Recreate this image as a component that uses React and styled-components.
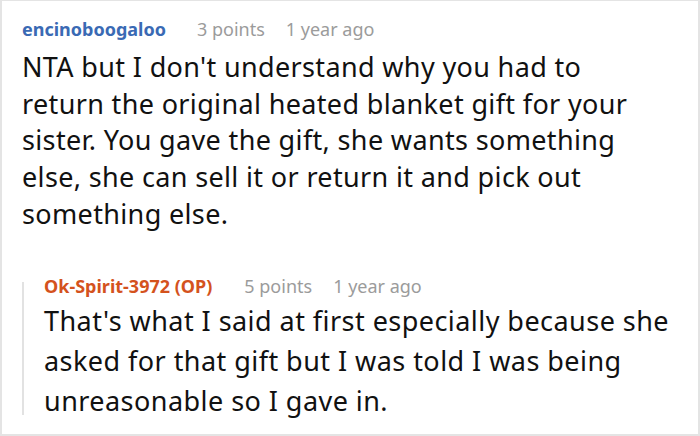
import React from 'react';
import styled, { createGlobalStyle } from 'styled-components';

const GlobalStyle = createGlobalStyle`
  html, body {
    margin: 0;
    padding: 0;
    background: #ffffff;
  }
  body {
    font-family: "Noto Sans", "Open Sans", sans-serif;
  }
`;

const Frame = styled.div`
  box-sizing: border-box;
  width: 700px;
  height: 436px;
  border: 2px solid #e4e4e4;
  border-top-width: 1px;
  padding: 18px 20px 0 20px;
  background: #fff;
  overflow: hidden;
`;

const Header = styled.div`
  display: flex;
  align-items: baseline;
  height: 20px;
  line-height: 20px;
  font-size: 18px;
  white-space: nowrap;
`;

const Author = styled.span`
  font-weight: 700;
  color: ${p => (p.$op ? '#d4521d' : '#3a6ab4')};
`;

const Meta = styled.span`
  color: #9b9b9b;
  margin-left: ${p => p.$gap}px;
`;

const Body = styled.p`
  margin: ${p => p.$top}px ${p => p.$right}px 0 0;
  font-size: 27px;
  letter-spacing: ${p => p.$ls}px;
  line-height: ${p => p.$lh}px;
  color: #111;
`;

const Reply = styled.div`
  position: relative;
  margin-top: ${p => p.$top}px;
  padding-left: 22px;

  &::before {
    content: '';
    position: absolute;
    left: 0;
    top: 6px;
    bottom: 6px;
    width: 2px;
    background: #e2e2e2;
  }
`;

const Comment = ({ author, op, points, time, gaps, children, bodyTop, lh, ls, right = 0 }) => (
  <>
    <Header>
      <Author $op={op}>{author}</Author>
      <Meta $gap={gaps[0]}>{points} points</Meta>
      <Meta $gap={gaps[1]}>{time}</Meta>
    </Header>
    <Body $top={bodyTop} $lh={lh} $ls={ls} $right={right}>{children}</Body>
  </>
);

export default function App() {
  return (
    <>
      <GlobalStyle />
      <Frame>
        <Comment
          author="encinoboogaloo"
          points={3}
          time="1 year ago"
          gaps={[31, 21]}
          bodyTop={10}
          lh={36.7}
          ls={0.35}
          right={36}
        >
          NTA but I don't understand why you had to return the original heated blanket gift
          for your sister. You gave the gift, she wants something else, she can sell it or
          return it and pick out something else.
        </Comment>
        <Reply $top={43}>
          <Comment
            author="Ok-Spirit-3972 (OP)"
            op
            points={5}
            time="1 year ago"
            gaps={[32, 21]}
            bodyTop={5}
            lh={40}
            ls={0.45}
          >
            That's what I said at first especially because she asked for that gift but I was
            told I was being unreasonable so I gave in.
          </Comment>
        </Reply>
      </Frame>
    </>
  );
}
